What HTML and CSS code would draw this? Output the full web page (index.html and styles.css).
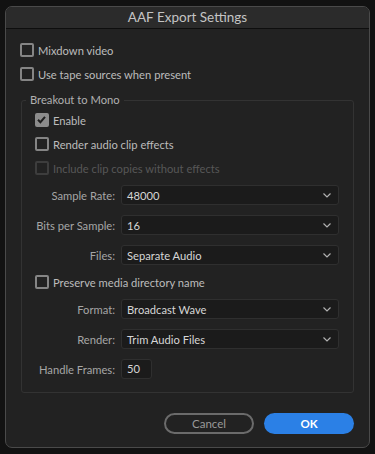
FILE: index.html
```html
<!DOCTYPE html>
<html>
<head>
  <title>AAF Export Settings</title>
  <link rel="stylesheet" href="styles.css">
</head>
<body>
  <div class="window">
    <div class="titlebar">AAF Export Settings</div>

    <div class="content">
      <!-- top options -->
      <label class="check"><span class="box"></span>Mixdown video</label>
      <label class="check"><span class="box"></span>Use tape sources when present</label>

      <!-- Breakout to Mono group -->
      <fieldset class="group">
        <legend>Breakout to Mono</legend>

        <label class="check"><span class="box checked"><svg viewBox="0 0 13 13" width="13" height="13"><polyline points="3,6.8 5.4,9.2 10,3.8" fill="none" stroke="#1f1f1f" stroke-width="2"/></svg></span>Enable</label>
        <label class="check"><span class="box"></span>Render audio clip effects</label>
        <label class="check disabled"><span class="box"></span>Include clip copies without effects</label>

        <div class="field first">
          <span class="field-label">Sample Rate:</span>
          <div class="select">48000<svg class="chev" viewBox="0 0 8 5" width="8" height="5"><polyline points="0.5,0.5 4,4 7.5,0.5" fill="none" stroke="#b0b0b0" stroke-width="1.2"/></svg></div>
        </div>
        <div class="field">
          <span class="field-label">Bits per Sample:</span>
          <div class="select">16<svg class="chev" viewBox="0 0 8 5" width="8" height="5"><polyline points="0.5,0.5 4,4 7.5,0.5" fill="none" stroke="#b0b0b0" stroke-width="1.2"/></svg></div>
        </div>
        <div class="field">
          <span class="field-label">Files:</span>
          <div class="select">Separate Audio<svg class="chev" viewBox="0 0 8 5" width="8" height="5"><polyline points="0.5,0.5 4,4 7.5,0.5" fill="none" stroke="#b0b0b0" stroke-width="1.2"/></svg></div>
        </div>

        <label class="check mid"><span class="box"></span>Preserve media directory name</label>

        <div class="field first">
          <span class="field-label">Format:</span>
          <div class="select">Broadcast Wave<svg class="chev" viewBox="0 0 8 5" width="8" height="5"><polyline points="0.5,0.5 4,4 7.5,0.5" fill="none" stroke="#b0b0b0" stroke-width="1.2"/></svg></div>
        </div>
        <div class="field">
          <span class="field-label">Render:</span>
          <div class="select">Trim Audio Files<svg class="chev" viewBox="0 0 8 5" width="8" height="5"><polyline points="0.5,0.5 4,4 7.5,0.5" fill="none" stroke="#b0b0b0" stroke-width="1.2"/></svg></div>
        </div>
        <div class="field">
          <span class="field-label">Handle Frames:</span>
          <div class="number">50</div>
        </div>
      </fieldset>

      <div class="buttons">
        <button class="btn cancel">Cancel</button>
        <button class="btn ok">OK</button>
      </div>
    </div>
  </div>
</body>
</html>
```
FILE: styles.css
```css
body {
  margin: 0;
  background-color: #121212;
  font-family: Lato, "Open Sans", sans-serif;
  font-size: 11.2px;
  color: #bcbcbc;
}

.window {
  margin: 6px 0 0 5px;
  width: 363px;
  height: 440px;
  border: 1px solid #4a4a4a;
  border-radius: 7px;
  background-color: #222222;
  overflow: hidden;
}

.titlebar {
  height: 21px;
  line-height: 21px;
  text-align: center;
  font-size: 13.5px;
  color: #c4c4c4;
  background-color: #2b2b2b;
  border-bottom: 1px solid #0e0e0e;
}

.content {
  padding: 9px 14px 0 14px;
}

.check {
  display: flex;
  align-items: center;
  height: 24px;
  gap: 4px;
}

.box {
  flex-shrink: 0;
  width: 10px;
  height: 10px;
  border: 2px solid #858585;
  border-radius: 2px;
  display: flex;
}

.box.checked {
  background-color: #8c8c8c;
  border-color: #8c8c8c;
}

.box.checked svg {
  margin: -2px;
}

.check.disabled {
  color: #575757;
}

.check.disabled .box {
  border-color: #3d3d3d;
}

.group {
  margin: 6px 1px 0 1px;
  padding: 0 0 13px 13px;
  border: 1px solid #333333;
  border-radius: 3px;
}

.group legend {
  margin-left: -9px;
  padding: 0 4px;
  line-height: 16px;
  color: #b0b0b0;
}

.field {
  display: flex;
  align-items: center;
  margin-top: 10px;
}

.field.first {
  margin-top: 5px;
}

.check.mid {
  margin-top: 5px;
}

.field-label {
  flex-shrink: 0;
  width: 93px;
  margin-left: -13px;
  padding-right: 6px;
  text-align: right;
  white-space: nowrap;
  color: #a6a6a6;
}

.select {
  flex-shrink: 0;
  width: 206px;
  height: 18px;
  padding: 0 5px;
  display: flex;
  align-items: center;
  justify-content: space-between;
  background-color: #1b1b1b;
  border: 1px solid #2f2f2f;
  border-radius: 3px;
  color: #d6d6d6;
}

.chev {
  margin-right: 2px;
}

.number {
  width: 24px;
  height: 18px;
  padding-left: 5px;
  line-height: 18px;
  background-color: #1b1b1b;
  border: 1px solid #2f2f2f;
  border-radius: 3px;
  color: #d6d6d6;
}

.buttons {
  display: flex;
  justify-content: flex-end;
  gap: 10px;
  margin-top: 20px;
  padding-right: 1px;
}

.btn {
  width: 90px;
  height: 21px;
  border-radius: 11px;
  font-family: Lato, "Open Sans", sans-serif;
  font-size: 11.5px;
  cursor: pointer;
}

.cancel {
  background-color: transparent;
  border: 2px solid #6b6b6b;
  color: #9a9a9a;
}

.ok {
  background-color: #2b80e6;
  border: none;
  color: #ffffff;
  font-weight: bold;
}
```
